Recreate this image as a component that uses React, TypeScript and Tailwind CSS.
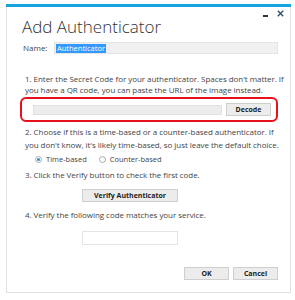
import React from "react";

export default function App() {
  const body = "text-[8px] leading-[11px] text-[#444] tracking-[-0.05px] whitespace-nowrap";
  const btn =
    "h-[13px] border border-[#cfcfcf] bg-[#ececec] text-[7px] font-bold text-[#222] flex items-center justify-center leading-none";
  return (
    <div
      className="w-[295px] h-[300px] bg-white relative overflow-hidden"
      style={{ fontFamily: '"Open Sans", "Noto Sans", sans-serif' }}
    >
      <div className="absolute left-[6px] top-[4px] w-[285px] h-[289px] border border-[#e1e1e1] border-t-0 bg-white flex flex-col">
        <div className="h-[3px] bg-[#17a3de] -mx-px" />
        <div className="relative">
          <div className="absolute right-[6px] top-[3px] flex items-center gap-[9px] text-[#333]">
            <div className="w-[5px] h-[1.5px] bg-[#333] mt-[5px]" />
            <svg width="7" height="7" viewBox="0 0 7 7">
              <path d="M0.8 0.8 L6.2 6.2 M6.2 0.8 L0.8 6.2" stroke="#2c4a6b" strokeWidth="1.3" />
            </svg>
          </div>
        </div>
        <div className="pl-[15px] pt-[10px] text-[17px] leading-[20px] font-light text-[#333]">
          Add Authenticator
        </div>
        <div className="flex items-center pl-[16px] mt-[5px]">
          <span className="text-[8px] text-[#444] w-[31px]">Name:</span>
          <div className="w-[224px] h-[12px] bg-[#f0f0f0] border border-[#e4e4e4] flex items-center px-[1px]">
            <span className="bg-[#3399ff] text-white text-[7.5px] leading-[9px] px-[1px]">Authenticator</span>
          </div>
        </div>
        <div className={`${body} pl-[18px] mt-[19px]`}>
          1. Enter the Secret Code for your authenticator. Spaces don't matter. If
          <br />
          you have a QR code, you can paste the URL of the image instead.
        </div>
        <div className="ml-[13px] mt-[2px] w-[258px] h-[25px] border-2 border-[#e8101a] rounded-[6px] flex items-center pl-[11px]">
          <div className="w-[189px] h-[10px] bg-[#ececec] border border-[#e0e0e0]" />
          <div className={`${btn} ml-[4px] w-[45px] h-[12px]`}>Decode</div>
        </div>
        <div className={`${body} pl-[18px] mt-[3px] leading-[13px]`}>
          2. Choose if this is a time-based or a counter-based authenticator. If
          <br />
          you don't know, it's likely time-based, so just leave the default choice.
        </div>
        <div className="flex items-center pl-[28px] mt-[3px] text-[7.5px] text-[#444]">
          <span className="w-[7px] h-[7px] rounded-full border border-[#aaa] flex items-center justify-center">
            <span className="w-[3px] h-[3px] rounded-full bg-[#1f8fd6]" />
          </span>
          <span className="ml-[4px]">Time-based</span>
          <span className="ml-[12px] w-[7px] h-[7px] rounded-full border border-[#aaa]" />
          <span className="ml-[4px]">Counter-based</span>
        </div>
        <div className={`${body} pl-[18px] mt-[4px]`}>
          3. Click the Verify button to check the first code.
        </div>
        <div className={`${btn} ml-[75px] mt-[9px] w-[96px]`}>Verify Authenticator</div>
        <div className={`${body} pl-[18px] mt-[7px]`}>
          4. Verify the following code matches your service.
        </div>
        <div className="ml-[75px] mt-[11px] w-[96px] h-[14px] border border-[#e4e4e4] bg-white" />
        <div className="flex justify-end gap-[4px] pr-[12px] mt-[22px]">
          <div className={`${btn} w-[45px]`}>OK</div>
          <div className={`${btn} w-[45px]`}>Cancel</div>
        </div>
      </div>
    </div>
  );
}
